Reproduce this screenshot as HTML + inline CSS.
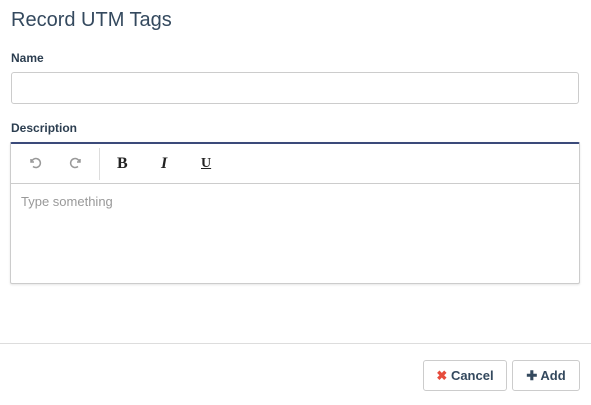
<!DOCTYPE html>
<html><head><style>
body{margin:0;width:591px;height:405px;background:#fff;font-family:"Liberation Sans",sans-serif;color:#34495e;position:relative;overflow:hidden}
.a{position:absolute}
h1{position:absolute;left:11px;top:9px;margin:0;font-size:20px;font-weight:normal;color:#34495e}
.lbl{font-size:12px;font-weight:bold;color:#2c3e50}
.inp{left:11px;top:72px;width:566px;height:30px;border:1px solid #ccc;border-radius:3px}
.ed{left:10px;top:142px;width:568px;height:139px;border:1px solid #ccc;border-top:2px solid #3b4a7a;border-radius:2px;box-shadow:0 1px 2px rgba(0,0,0,.1)}
.tb{position:absolute;left:0;top:0;right:0;height:39px;border-bottom:1px solid #ccc}
.btn{top:360px;height:29px;border:1px solid #ccc;border-radius:3px;font-size:13px;font-weight:bold;line-height:29px;text-align:center;color:#34495e}
</style></head><body>
<h1>Record UTM Tags</h1>
<div class="a lbl" style="left:11px;top:51px">Name</div>
<div class="a inp"></div>
<div class="a lbl" style="left:11px;top:121px">Description</div>
<div class="a ed">
 <div class="tb">
  <svg class="a" style="left:17px;top:12px" width="14" height="14" viewBox="0 0 14 14"><path d="M3 3v3h3M3.5 6A4.5 4.5 0 1 1 5 10.5" fill="none" stroke="#999" stroke-width="1.5"/></svg>
  <svg class="a" style="left:58px;top:12px" width="14" height="14" viewBox="0 0 14 14"><path d="M11 3v3h-3M10.5 6A4.5 4.5 0 1 0 9 10.5" fill="none" stroke="#999" stroke-width="1.5"/></svg>
  <div class="a" style="left:88px;top:4px;width:1px;height:32px;background:#ddd"></div>
  <div class="a" style="left:106px;top:11px;font:bold 16px 'Liberation Serif',serif;color:#222">B</div>
  <div class="a" style="left:150px;top:11px;font:italic bold 16px 'Liberation Serif',serif;color:#222">I</div>
  <div class="a" style="left:190px;top:12px;font:bold 14px 'Liberation Serif',serif;color:#222;text-decoration:underline">U</div>
 </div>
 <div class="a" style="left:10px;top:50px;font-size:13px;color:#999">Type something</div>
</div>
<div class="a" style="left:0;top:343px;width:591px;height:1px;background:#ddd"></div>
<div class="a btn" style="left:423px;width:82px"><span style="color:#e74c3c">✖</span> Cancel</div>
<div class="a btn" style="left:512px;width:66px">✚ Add</div>
</body></html>
